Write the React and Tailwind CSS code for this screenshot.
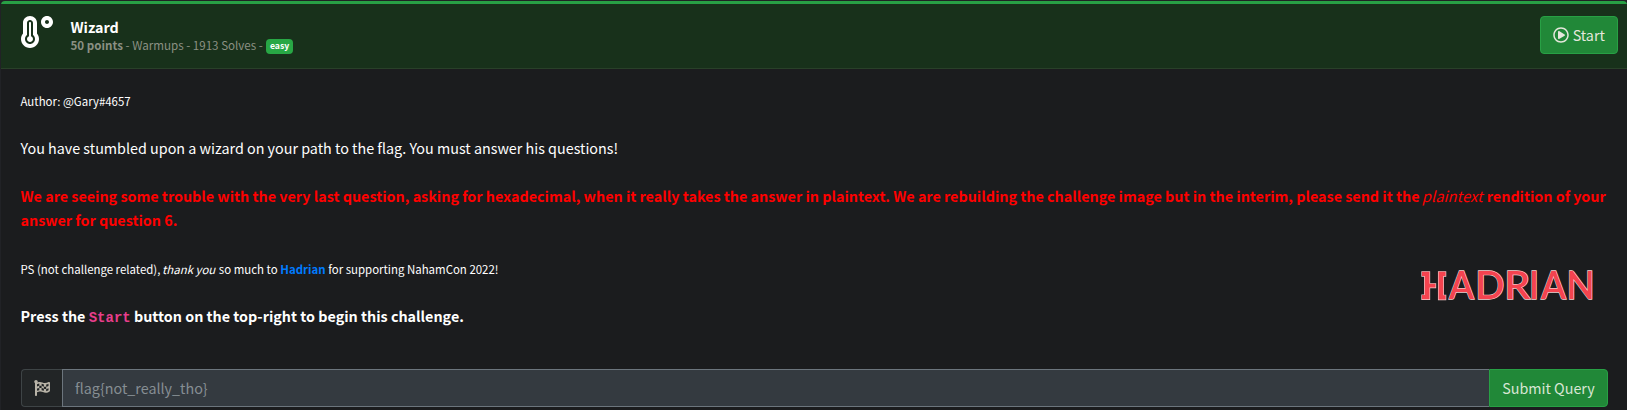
import { FaTemperatureHigh, FaRegPlayCircle, FaFlagCheckered } from "react-icons/fa";

const letters = [
  ["A", 1, 28, 25],
  ["D", 2, 54.2, 29.3],
  ["R", 3, 83.2, 26],
  ["I", 4, 108, 10],
  ["A", 5, 120, 25],
  ["N", 6, 145.6, 28.2],
];

function HadrianLogo() {
  return (
    <svg width="176" height="32" viewBox="0 0 176 32" role="img" aria-label="Hadrian" className="overflow-visible" fill="#f5434f" stroke="#f3cfcf" strokeWidth="1.3" paintOrder="stroke">
      <path d="M1 1.800h7.500v12H14.500v3.800H8.500v11.700H1v-4.200h2.700V6H1zM17.600 1.800h7V6h-2.300v19.300h2.300v4.200h-7z" />
      <g fontFamily="Lato, sans-serif" fontWeight="600" fontSize="38.200">
        {letters.map(([c, k, x, w]) => (
          <text key={k} x={x} y="29.300" textLength={w} lengthAdjust="spacingAndGlyphs">{c}</text>
        ))}
      </g>
    </svg>
  );
}

export default function App() {
  return (
    <div className="h-[410px] overflow-hidden bg-[#212226] pl-px pt-px font-['Noto_Sans_CJK_SC',sans-serif] text-[14.33px] leading-6 text-white">
      <div className="h-full rounded-t border-t-[3px] border-[#28a045] bg-[#1b1c1e]">
        <header className="flex h-[65px] items-start border-b border-[#294029] bg-[#18311b] pl-[20px] pr-[9px] pt-3">
          <FaTemperatureHigh className="size-8" />
          <div className="ml-[17.5px] mt-[2px]">
            <div className="text-[14.33px] font-bold leading-[18px]">Wizard</div>
            <div className="flex items-center text-[11.6px] leading-[18px] text-[#8b9083]">
              <b>50 points</b>
              <span className="whitespace-pre"> - Warmups - 1913 Solves - </span>
              <span className="ml-[0.5px] mt-[2px] flex h-[15px] items-center rounded bg-[#28a745] px-1 text-[8.7px] font-bold text-white">easy</span>
            </div>
          </div>
          <button className="ml-auto flex h-[38px] w-[78px] items-center justify-center gap-[3.5px] rounded border border-[#28a045] bg-[#218838] text-[#e5e7dc]">
            <FaRegPlayCircle className="size-4" />
            Start
          </button>
        </header>
        <main className="flex h-[288px] flex-col pl-[19.5px] pr-[15px] pt-[20px]">
          <p className="text-[11.44px]">Author: @Gary#4657</p>
          <p className="mt-[23px]">You have stumbled upon a wizard on your path to the flag. You must answer his questions!</p>
          <p className="mt-6 font-bold text-[#ff0000]">
            We are seeing some trouble with the very last question, asking for hexadecimal, when it really takes the answer in plaintext. We are rebuilding the challenge image but in the interim, please send it the <i className="relative -left-px text-[14.8px] font-normal leading-none">plaintext</i> rendition of your<br />answer for question 6.
          </p>
          <div className="mt-[25px] flex">
            <div>
              <p className="text-[11.44px]">
                PS (not challenge related), <i className="relative -left-px">thank you</i> so much to <b className="text-[#007bff]">Hadrian</b> for supporting NahamCon 2022!
              </p>
              <p className="mt-[23px] font-bold">
                Press the <code className="font-['Liberation_Mono',monospace] text-[14px] font-bold text-[#e83e8c]">Start</code> button on the top-right to begin this challenge.
              </p>
            </div>
            <div className="ml-auto mr-[15px] mt-[13px]"><HadrianLogo /></div>
          </div>
        </main>
        <form className="ml-5 mr-[19px] mt-3 flex h-[38px]">
          <span className="flex w-[41px] items-center justify-center rounded-l border border-r-0 border-[#3e4446] bg-[#222526] text-[#b9b4a8]">
            <FaFlagCheckered className="size-4" />
          </span>
          <span className="flex grow items-center border border-r-0 border-[#6c757d] bg-[#343a40] pl-3 text-[#868e93]">flag&#123;not_really_tho&#125;</span>
          <button type="button" className="w-[119px] rounded-r border border-[#28a045] bg-[#218838] text-[#d8e6d4]">Submit Query</button>
        </form>
      </div>
    </div>
  );
}
